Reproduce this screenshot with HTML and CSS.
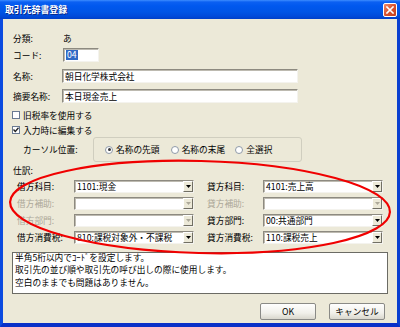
FILE: index.html
```html
<!DOCTYPE html>
<html lang="ja">
<head>
  <meta charset="UTF-8" />
  <title>取引先辞書登録</title>
  <link rel="stylesheet" href="styles.css">
</head>
<body>
  <div class="stage">
    <div class="window">
      <div class="titlebar">
        <span class="title">取引先辞書登録</span>
        <span class="close">
          <svg width="8" height="8" viewBox="0 0 8 8"><path d="M1 1L7 7M7 1L1 7" stroke="#fff" stroke-width="1.6" stroke-linecap="square"/></svg>
        </span>
      </div>

      <div class="client">
        <div class="row"><span class="label">分類:</span><span>あ</span></div>
        <div class="row r-code"><span class="label">コード:</span><span class="input short"><span class="sel">04</span></span></div>
        <div class="row r-name"><span class="label">名称:</span><span class="input wide">朝日化学株式会社</span></div>
        <div class="row r-memo"><span class="label">摘要名称:</span><span class="input wide">本日現金売上</span></div>

        <div class="check c1"><span class="box"></span>旧税率を使用する</div>
        <div class="check c2">
          <span class="box"><svg width="6" height="6" viewBox="0 0 6 6"><path d="M0.5 2.5L2.3 4.5L5.5 0.8" fill="none" stroke="#222" stroke-width="1.3"/></svg></span>入力時に編集する
        </div>

        <div class="cursor-row">
          <span class="cursor-label">カーソル位置:</span>
          <div class="group">
            <span class="radio on"><i></i>名称の先頭</span>
            <span class="radio"><i></i>名称の末尾</span>
            <span class="radio"><i></i>全選択</span>
          </div>
        </div>

        <div class="section">仕訳:</div>

        <div class="journal">
          <span class="jlabel">借方科目:</span>
          <span class="combo">1101:現金<span class="arrow"><svg width="5" height="3" viewBox="0 0 5 3"><path d="M0 0H5L2.5 3Z"/></svg></span></span>
          <span class="jlabel right">貸方科目:</span>
          <span class="combo">4101:売上高<span class="arrow"><svg width="5" height="3" viewBox="0 0 5 3"><path d="M0 0H5L2.5 3Z"/></svg></span></span>

          <span class="jlabel off">借方補助:</span>
          <span class="combo off"><span class="arrow"><svg width="5" height="3" viewBox="0 0 5 3"><path d="M0 0H5L2.5 3Z"/></svg></span></span>
          <span class="jlabel right off">貸方補助:</span>
          <span class="combo off"><span class="arrow"><svg width="5" height="3" viewBox="0 0 5 3"><path d="M0 0H5L2.5 3Z"/></svg></span></span>

          <span class="jlabel off">借方部門:</span>
          <span class="combo off"><span class="arrow"><svg width="5" height="3" viewBox="0 0 5 3"><path d="M0 0H5L2.5 3Z"/></svg></span></span>
          <span class="jlabel right">貸方部門:</span>
          <span class="combo">00:共通部門<span class="arrow"><svg width="5" height="3" viewBox="0 0 5 3"><path d="M0 0H5L2.5 3Z"/></svg></span></span>

          <span class="jlabel">借方消費税:</span>
          <span class="combo">810:課税対象外・不課税<span class="arrow"><svg width="5" height="3" viewBox="0 0 5 3"><path d="M0 0H5L2.5 3Z"/></svg></span></span>
          <span class="jlabel right">貸方消費税:</span>
          <span class="combo">110:課税売上<span class="arrow"><svg width="5" height="3" viewBox="0 0 5 3"><path d="M0 0H5L2.5 3Z"/></svg></span></span>
        </div>

        <div class="memo">
          <p>半角5桁以内でｺｰﾄﾞを設定します。</p>
          <p>取引先の並び順や取引先の呼び出しの際に使用します。</p>
          <p>空白のままでも問題はありません。</p>
        </div>

        <div class="buttons">
          <button type="button">OK</button>
          <button type="button">キャンセル</button>
        </div>
      </div>
    </div>

    <!-- red hand-drawn mark over the journal block -->
    <svg class="mark" width="400" height="327" viewBox="0 0 400 327">
      <ellipse cx="200" cy="207" rx="190" ry="46" transform="rotate(1.5 200 207)" fill="none" stroke="#f00000" stroke-width="2.2"/>
    </svg>
  </div>
</body>
</html>
```

FILE: styles.css
```css
* {
  margin: 0;
  padding: 0;
  box-sizing: border-box;
}

body {
  width: 400px;
  height: 327px;
  overflow: hidden;
  font-family: "Noto Sans CJK JP", "Noto Sans", sans-serif;
  font-size: 8.7px;
  color: #000;
  background: #ece9d8;
}

.stage {
  position: relative;
  width: 400px;
  height: 327px;
}

.window {
  display: flex;
  flex-direction: column;
  width: 400px;
  height: 327px;
  background: #ece9d8;
  border-left: 3px solid #0b4be0;
  border-right: 3px solid #0a3fd0;
  border-bottom: 4px solid #0930c8;
}

/* Title bar */
.titlebar {
  display: flex;
  align-items: center;
  height: 19px;
  margin: 0 -3px;
  padding-left: 5px;
  background: linear-gradient(#3d8dff 0, #0b60f2 2px, #0058ee 6px, #0055e5 12px, #004bdb 16px, #0040c8 19px);
}

.title {
  color: #fff;
  font-weight: bold;
  font-size: 8.9px;
  text-shadow: 1px 1px 0 #0a2a8a;
}

.close {
  display: flex;
  align-items: center;
  justify-content: center;
  width: 14px;
  height: 14px;
  margin-left: auto;
  margin-right: 3px;
  border: 1px solid #fff;
  border-radius: 2px;
  background: linear-gradient(135deg, #f08a6a, #d9532f 50%, #c4401d);
}

/* Client area */
.client {
  flex: 1;
  padding: 12px 0 0 10px;
}

.row {
  display: flex;
  align-items: center;
  height: 14px;
}

.label {
  width: 50px;
}

.r-code { margin-top: 3px; }
.r-name { margin-top: 7px; }
.r-memo { margin-top: 6px; }

.r-name .label,
.r-memo .label {
  width: 49px;
}

.input {
  display: flex;
  align-items: center;
  height: 14px;
  padding-left: 2px;
  background: #fff;
  border: 1px solid;
  border-color: #8d8a80 #f4f3ee #f4f3ee #8d8a80;
  box-shadow: inset 1px 1px 0 #bdbab0;
}

.input.short { width: 36px; }
.input.wide { width: 236px; }

.sel {
  background: #316ac5;
  color: #fff;
  padding: 0 1px;
  line-height: 10px;
}

/* Checkboxes */
.check {
  display: flex;
  align-items: center;
  gap: 3px;
  height: 14px;
  margin-left: -1px;
}

.c1 { margin-top: 5px; }
.c2 { margin-top: 1px; }

.box {
  display: flex;
  align-items: center;
  justify-content: center;
  width: 8px;
  height: 8px;
  background: #fff;
  border: 1px solid #6a7a92;
}

/* Cursor position group */
.cursor-row {
  display: flex;
  align-items: center;
  padding-left: 10px;
}

.cursor-label {
  width: 70px;
}

.group {
  display: flex;
  align-items: center;
  width: 209px;
  height: 25px;
  padding-left: 11px;
  border: 1px solid #d0cebf;
  border-radius: 3px;
}

.radio {
  display: flex;
  align-items: center;
  gap: 3px;
  width: 72px;
}

.radio:nth-child(2) { width: 71px; }

.radio i {
  display: flex;
  align-items: center;
  justify-content: center;
  width: 8px;
  height: 8px;
  border-radius: 50%;
  background: #fff;
  border: 1px solid #8f9aa8;
}

.radio.on i::after {
  content: "";
  width: 3px;
  height: 3px;
  border-radius: 50%;
  background: #3a3a3a;
}

.section {
  display: flex;
  align-items: center;
  height: 14px;
  margin-top: 1px;
}

/* Journal combos */
.journal {
  display: grid;
  grid-template-columns: 57px 120px 69px 120px;
  grid-auto-rows: 13px;
  row-gap: 4px;
  margin-top: 3px;
  padding-left: 4px;
}

.jlabel {
  display: flex;
  align-items: center;
}

.jlabel.right { padding-left: 13px; }
.jlabel.off { color: #aca899; }

.combo {
  display: flex;
  align-items: center;
  height: 13px;
  padding-left: 2px;
  background: #fff;
  border: 1px solid;
  border-color: #8d8a80 #f4f3ee #f4f3ee #8d8a80;
  box-shadow: inset 1px 1px 0 #bdbab0;
}

.arrow {
  display: flex;
  align-items: center;
  justify-content: center;
  width: 10px;
  height: 11px;
  margin-left: auto;
  background: #ece9d8;
  border: 1px solid;
  border-color: #fff #716f64 #716f64 #fff;
}

.arrow svg { fill: #000; }
.combo.off .arrow svg { fill: #aca899; }

/* Memo */
.memo {
  width: 376px;
  height: 42px;
  margin-top: 8px;
  margin-left: -1px;
  padding: 0 2px;
  line-height: 12.7px;
  background: #fff;
  border: 1px solid #6b6b64;
  overflow: hidden;
}

.memo p:first-child {
  margin-top: -1.5px;
}

/* Buttons */
.buttons {
  display: flex;
  justify-content: flex-end;
  gap: 13px;
  margin-top: 9px;
  padding-right: 12px;
}

.buttons button {
  width: 56px;
  height: 17px;
  font-family: inherit;
  font-size: 8.7px;
  color: #000;
  border: 1px solid #8a8a86;
  border-radius: 2px;
  background: linear-gradient(#fefefe, #f1f0ea 60%, #d9d7cd);
}

.mark {
  position: absolute;
  top: 0;
  left: 0;
  pointer-events: none;
}
```
